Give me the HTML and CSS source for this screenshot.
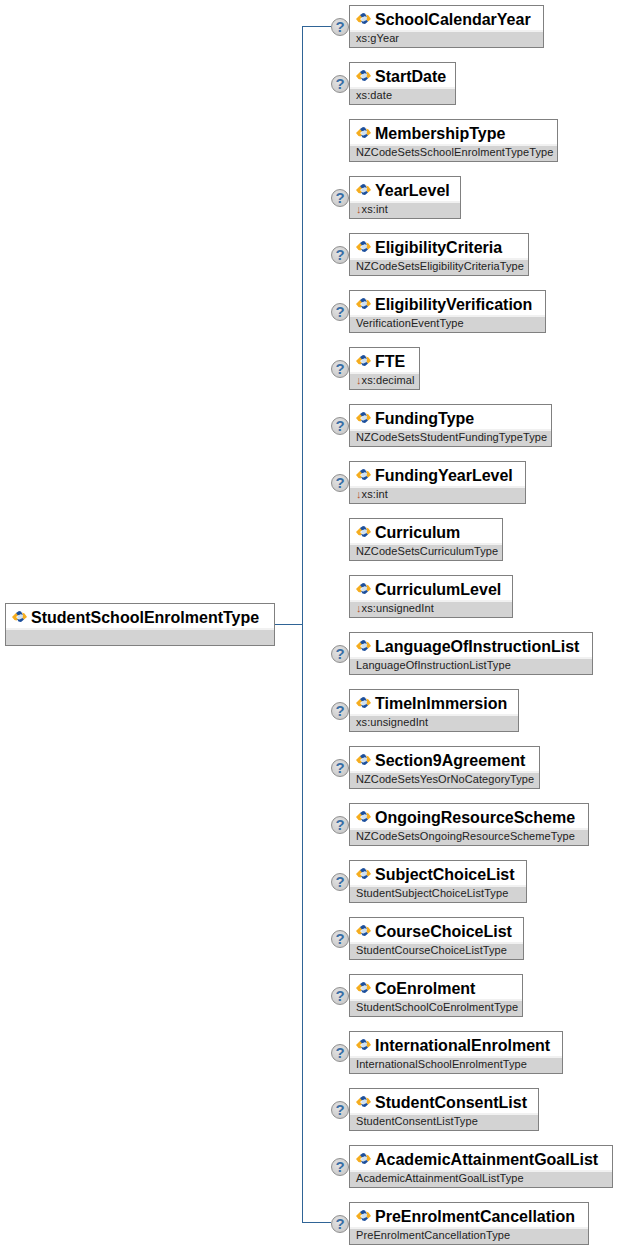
FILE: index.html
```html
<!DOCTYPE html>
<html lang="en">
<head>
<meta charset="utf-8">
<title>StudentSchoolEnrolmentType</title>
<link rel="stylesheet" href="styles.css">
</head>
<body>
<svg class="defs" width="0" height="0" aria-hidden="true">
  <symbol id="el" viewBox="0 0 15 11">
    <path d="M0 6 4 2 7 3.5 4 6 6 8 4.5 9.5 2.5 9Z" fill="#f5ad1f"/>
    <path d="M4 2 7 0 9 0.5 11 4 8.5 3.5 6 4.5Z" fill="#1c4f9c"/>
    <path d="M6 4.5 8.5 3.5 11 4 10.5 7 7.5 8.5 5 6.5Z" fill="#cfe1f2"/>
    <path d="M10 1.5 12.5 2.5 15 6 12 8.5 10.5 7 11 4Z" fill="#f5ad1f"/>
    <path d="M5 8 7.5 8.5 10.5 7 12 8.5 9 11 6.5 10.5Z" fill="#1c4f9c"/>
  </symbol>
</svg>
<main class="diagram">
  <section class="node root">
    <div class="head"><svg class="icon"><use href="#el"/></svg><span>StudentSchoolEnrolmentType</span></div>
    <div class="type"></div>
  </section>
  <div class="wire"></div>
  <div class="list">
    <div class="row"><div class="stub"></div><span class="help">?</span><section class="node" style="width:195px"><div class="head"><svg class="icon"><use href="#el"/></svg><span>SchoolCalendarYear</span></div><div class="type">xs:gYear</div></section></div>
    <div class="row"><div class="gap"></div><span class="help">?</span><section class="node" style="width:107px"><div class="head"><svg class="icon"><use href="#el"/></svg><span>StartDate</span></div><div class="type">xs:date</div></section></div>
    <div class="row"><div class="gap"></div><span class="nohelp"></span><section class="node" style="width:209px"><div class="head"><svg class="icon"><use href="#el"/></svg><span>MembershipType</span></div><div class="type">NZCodeSetsSchoolEnrolmentTypeType</div></section></div>
    <div class="row"><div class="gap"></div><span class="help">?</span><section class="node" style="width:112px"><div class="head"><svg class="icon"><use href="#el"/></svg><span>YearLevel</span></div><div class="type"><span class="arrow">↓</span>xs:int</div></section></div>
    <div class="row"><div class="gap"></div><span class="help">?</span><section class="node" style="width:180px"><div class="head"><svg class="icon"><use href="#el"/></svg><span>EligibilityCriteria</span></div><div class="type">NZCodeSetsEligibilityCriteriaType</div></section></div>
    <div class="row"><div class="gap"></div><span class="help">?</span><section class="node" style="width:197px"><div class="head"><svg class="icon"><use href="#el"/></svg><span>EligibilityVerification</span></div><div class="type">VerificationEventType</div></section></div>
    <div class="row"><div class="gap"></div><span class="help">?</span><section class="node" style="width:71px"><div class="head"><svg class="icon"><use href="#el"/></svg><span>FTE</span></div><div class="type"><span class="arrow">↓</span>xs:decimal</div></section></div>
    <div class="row"><div class="gap"></div><span class="help">?</span><section class="node" style="width:203px"><div class="head"><svg class="icon"><use href="#el"/></svg><span>FundingType</span></div><div class="type">NZCodeSetsStudentFundingTypeType</div></section></div>
    <div class="row"><div class="gap"></div><span class="help">?</span><section class="node" style="width:177px"><div class="head"><svg class="icon"><use href="#el"/></svg><span>FundingYearLevel</span></div><div class="type"><span class="arrow">↓</span>xs:int</div></section></div>
    <div class="row"><div class="gap"></div><span class="nohelp"></span><section class="node" style="width:154px"><div class="head"><svg class="icon"><use href="#el"/></svg><span>Curriculum</span></div><div class="type">NZCodeSetsCurriculumType</div></section></div>
    <div class="row"><div class="gap"></div><span class="nohelp"></span><section class="node" style="width:164px"><div class="head"><svg class="icon"><use href="#el"/></svg><span>CurriculumLevel</span></div><div class="type"><span class="arrow">↓</span>xs:unsignedInt</div></section></div>
    <div class="row"><div class="gap"></div><span class="help">?</span><section class="node" style="width:244px"><div class="head"><svg class="icon"><use href="#el"/></svg><span>LanguageOfInstructionList</span></div><div class="type">LanguageOfInstructionListType</div></section></div>
    <div class="row"><div class="gap"></div><span class="help">?</span><section class="node" style="width:170px"><div class="head"><svg class="icon"><use href="#el"/></svg><span>TimeInImmersion</span></div><div class="type">xs:unsignedInt</div></section></div>
    <div class="row"><div class="gap"></div><span class="help">?</span><section class="node" style="width:191px"><div class="head"><svg class="icon"><use href="#el"/></svg><span>Section9Agreement</span></div><div class="type">NZCodeSetsYesOrNoCategoryType</div></section></div>
    <div class="row"><div class="gap"></div><span class="help">?</span><section class="node" style="width:240px"><div class="head"><svg class="icon"><use href="#el"/></svg><span>OngoingResourceScheme</span></div><div class="type">NZCodeSetsOngoingResourceSchemeType</div></section></div>
    <div class="row"><div class="gap"></div><span class="help">?</span><section class="node" style="width:178px"><div class="head"><svg class="icon"><use href="#el"/></svg><span>SubjectChoiceList</span></div><div class="type">StudentSubjectChoiceListType</div></section></div>
    <div class="row"><div class="gap"></div><span class="help">?</span><section class="node" style="width:175px"><div class="head"><svg class="icon"><use href="#el"/></svg><span>CourseChoiceList</span></div><div class="type">StudentCourseChoiceListType</div></section></div>
    <div class="row"><div class="gap"></div><span class="help">?</span><section class="node" style="width:174px"><div class="head"><svg class="icon"><use href="#el"/></svg><span>CoEnrolment</span></div><div class="type">StudentSchoolCoEnrolmentType</div></section></div>
    <div class="row"><div class="gap"></div><span class="help">?</span><section class="node" style="width:214px"><div class="head"><svg class="icon"><use href="#el"/></svg><span>InternationalEnrolment</span></div><div class="type">InternationalSchoolEnrolmentType</div></section></div>
    <div class="row"><div class="gap"></div><span class="help">?</span><section class="node" style="width:190px"><div class="head"><svg class="icon"><use href="#el"/></svg><span>StudentConsentList</span></div><div class="type">StudentConsentListType</div></section></div>
    <div class="row"><div class="gap"></div><span class="help">?</span><section class="node" style="width:264px"><div class="head"><svg class="icon"><use href="#el"/></svg><span>AcademicAttainmentGoalList</span></div><div class="type">AcademicAttainmentGoalListType</div></section></div>
    <div class="row"><div class="stub"></div><span class="help">?</span><section class="node" style="width:240px"><div class="head"><svg class="icon"><use href="#el"/></svg><span>PreEnrolmentCancellation</span></div><div class="type">PreEnrolmentCancellationType</div></section></div>
  </div>
</main>
</body>
</html>
```

FILE: styles.css
```css
html, body {
  margin: 0;
  padding: 0;
  background: #fff;
}
.defs {
  position: absolute;
}
.diagram {
  display: flex;
  align-items: center;
  padding: 5px 0 0 5px;
  font-family: "Liberation Sans", Arial, sans-serif;
}
.node {
  display: flex;
  flex-direction: column;
  flex: none;
  height: 43px;
  box-sizing: border-box;
  border: 1px solid #808080;
  background: #d3d3d3;
}
.root {
  width: 270px;
  margin-bottom: 1px;
}
.head {
  display: flex;
  align-items: center;
  height: 20px;
  padding: 4px 0 0 6px;
  background: #fff;
  border-bottom: 2px solid #f1f1f1;
  font-size: 16px;
  font-weight: bold;
  color: #000;
  white-space: nowrap;
}
.icon {
  flex: none;
  width: 15px;
  height: 11px;
  margin: -4px 4px 0 0;
}
.type {
  height: 15px;
  line-height: 12px;
  padding-left: 6px;
  font-size: 11px;
  letter-spacing: 0.09px;
  color: #222;
  white-space: nowrap;
}
.arrow {
  color: #b5532a;
}
.wire {
  flex: none;
  width: 27px;
  height: 1px;
  margin-bottom: 1px;
  background: #2f6496;
}
.list {
  position: relative;
  display: flex;
  flex-direction: column;
  gap: 14px;
}
.list::before {
  content: "";
  position: absolute;
  left: 0;
  top: 21px;
  bottom: 22px;
  width: 1px;
  background: #2f6496;
}
.row {
  display: flex;
  align-items: flex-start;
  height: 43px;
}
.stub {
  flex: none;
  width: 29px;
  height: 1px;
  margin-top: 21px;
  background: #2f6496;
}
.row:last-child .stub {
  margin-top: 20px;
}
.gap {
  flex: none;
  width: 29px;
}
.help, .nohelp {
  flex: none;
  width: 18px;
  height: 18px;
  margin-top: 13px;
  box-sizing: border-box;
}
.help {
  border: 1px solid #8f8f8f;
  border-radius: 50%;
  background: radial-gradient(circle at 40% 35%, #e4e4e4, #c2c2c2);
  color: #3a6ea5;
  font-size: 15px;
  font-weight: bold;
  line-height: 16px;
  text-align: center;
}
```
